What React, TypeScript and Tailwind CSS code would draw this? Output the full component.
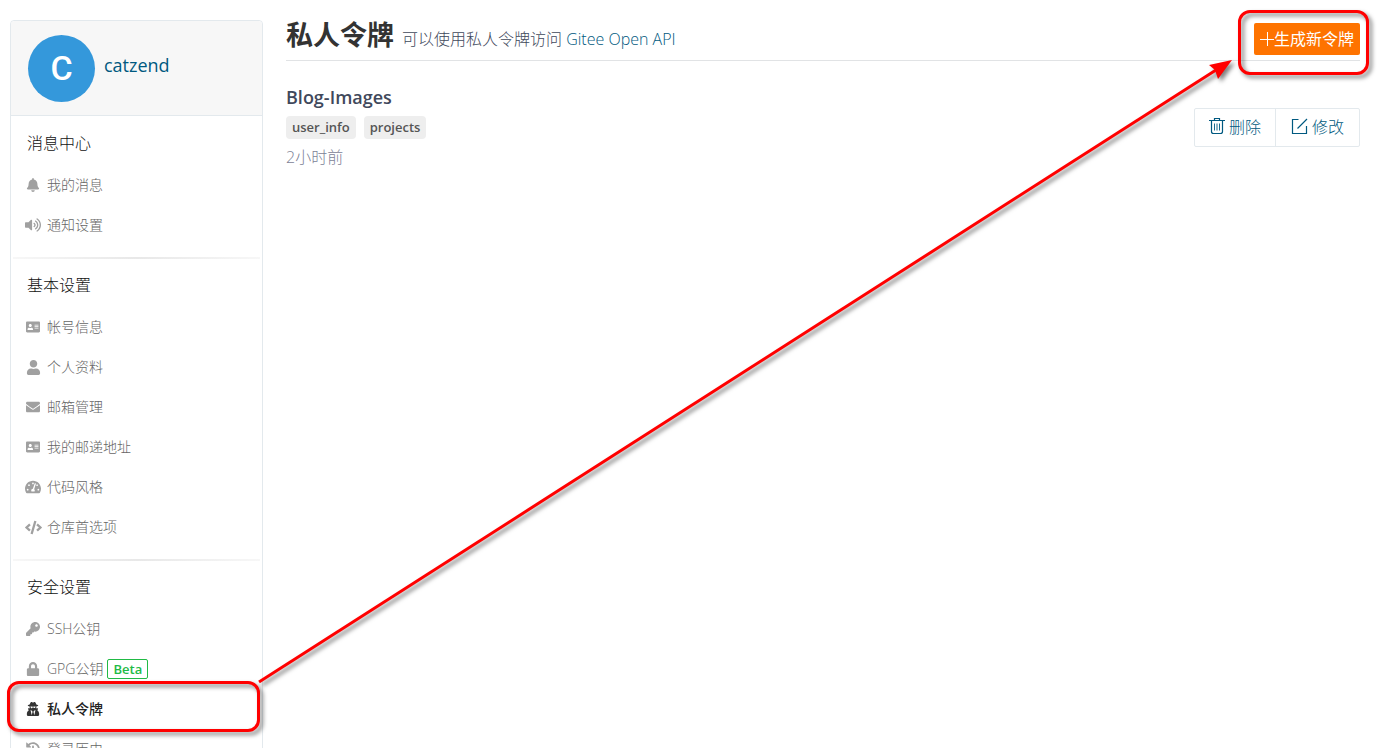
import React from "react";
import {
  FaBell, FaVolumeUp, FaAddressCard, FaUser, FaEnvelope, FaTachometerAlt,
  FaCode, FaKey, FaLock, FaUserSecret, FaHistory,
} from "react-icons/fa";
import type { IconType } from "react-icons";

type Item = { label: string; icon: IconType; size?: number; beta?: boolean; active?: boolean };
type Group = { title: string; items: Item[] };

const groups: Group[] = [
  {
    title: "消息中心",
    items: [
      { label: "我的消息", icon: FaBell },
      { label: "通知设置", icon: FaVolumeUp, size: 16 },
    ],
  },
  {
    title: "基本设置",
    items: [
      { label: "帐号信息", icon: FaAddressCard },
      { label: "个人资料", icon: FaUser, size: 15 },
      { label: "邮箱管理", icon: FaEnvelope },
      { label: "我的邮递地址", icon: FaAddressCard },
      { label: "代码风格", icon: FaTachometerAlt, size: 16 },
      { label: "仓库首选项", icon: FaCode, size: 17 },
    ],
  },
  {
    title: "安全设置",
    items: [
      { label: "SSH公钥", icon: FaKey },
      { label: "GPG公钥", icon: FaLock, beta: true },
      { label: "私人令牌", icon: FaUserSecret, active: true },
      { label: "登录历史", icon: FaHistory },
    ],
  },
];

function MenuItem({ label, icon: Icon, size = 14, beta, active }: Item) {
  return (
    <li className="relative flex h-10 items-center">
      <a
        href="#"
        className={
          active
            ? "flex items-center gap-1.5 text-sm font-medium text-[#222]"
            : "flex items-center gap-1.5 text-sm font-light text-[#666]"
        }
      >
        <span className={active ? "flex w-4 justify-center text-[#333]" : "flex w-4 justify-center text-[#a0a0a0]"}>
          <Icon size={size} className="shrink-0" />
        </span>
        {label}
      </a>
      {beta && (
        <span className="ml-1 rounded-xs border border-[#21ba45] px-[5px] text-[13px] leading-[18px] font-semibold text-[#21ba45]">
          Beta
        </span>
      )}
      {active && (
        <span className="pointer-events-none absolute -top-2 right-0 -bottom-[3px] -left-[18px] rounded-xl border-[3px] border-[#f00] drop-shadow-[3px_3px_2px_rgba(0,0,0,0.5)]" />
      )}
    </li>
  );
}

function TrashIcon() {
  return (
    <svg width="16" height="17" viewBox="0 0 16 17" fill="none" stroke="currentColor">
      <path d="M0 2.5h16M5.5 2.5v-2h5v2M2.5 2.5v11q0 2 2 2h7q2 0 2-2v-11" strokeWidth="1.2" />
      <path d="M5.5 5.5v7M8 5.5v7M10.5 5.5v7" strokeWidth="0.9" />
    </svg>
  );
}

function EditIcon() {
  return (
    <svg width="17" height="17" viewBox="0 0 17 17" fill="none" stroke="currentColor" strokeWidth="1.2">
      <path d="M7.5 1.5H1.5v14H15.5V8M6.5 10.5L16 1" />
    </svg>
  );
}

function PlusIcon() {
  return (
    <svg width="14" height="16" viewBox="0 0 14 16" fill="none" stroke="currentColor">
      <path d="M0 8.5h14M7.5 1v14" />
    </svg>
  );
}

export default function App() {
  return (
    <div className="relative flex h-screen items-start gap-[23px] overflow-hidden bg-white pr-5 pl-2.5 font-['Open_Sans','Noto_Sans_CJK_SC',sans-serif] text-base font-light text-[#40485b]">
      <aside className="mt-5 w-[253px] shrink-0 rounded-t border border-[#e3e9ed]">
        <header className="flex h-[95px] items-center gap-[9px] rounded-t border-b border-[#e3e9ed] bg-[#f7f7f7] pl-[17px]">
          <span className="flex size-[67px] items-center justify-center rounded-full bg-[#3498db] font-['Roboto',sans-serif] text-[34px] font-medium text-white">
            C
          </span>
          <a href="#" className="pb-1.5 text-lg font-normal text-[#005980]">catzend</a>
        </header>
        <nav className="pt-px">
          {groups.map((g, i) => (
            <section key={g.title} className="pr-0.5 pl-3.5">
              {i > 0 && <div className="-ml-3 h-0.5 bg-linear-to-r from-[#f7f7f7] via-[#e8e8e8] to-[#f7f7f7]" />}
              <h2 className="flex h-12 items-end pb-2.5 pl-0.5 text-base leading-6 text-[#111]">{g.title}</h2>
              <ul className="pb-3">
                {g.items.map((it) => (
                  <MenuItem key={it.label} {...it} />
                ))}
              </ul>
            </section>
          ))}
        </nav>
      </aside>

      <main className="min-w-0 grow">
        <header className="flex h-[61px] justify-between border-b border-[#e1e3e5]">
          <div className="flex items-baseline gap-2 pt-[15px]">
            <h1 className="text-[27px] leading-10 font-bold text-[#333]">私人令牌</h1>
            <p>
              可以使用私人令牌访问 <a href="#" className="text-[#005980]">Gitee Open API</a>
            </p>
          </div>
          <div className="relative mt-[23px] h-8">
            <button type="button" className="flex h-8 items-center rounded-xs bg-[#fe7300] px-1.5 font-normal text-white">
              <PlusIcon />
              生成新令牌
            </button>
            <span className="pointer-events-none absolute -top-[13px] -right-[9px] -bottom-5 -left-4 rounded-xl border-[3px] border-[#f00] drop-shadow-[3px_3px_2px_rgba(0,0,0,0.5)]" />
          </div>
        </header>

        <article className="flex items-start justify-between pt-6">
          <div>
            <h3 className="text-lg leading-6 font-semibold">Blog-Images</h3>
            <div className="mt-[7px] flex gap-2 text-[13px] leading-[23px] font-semibold text-[#555]">
              <span className="rounded-sm bg-[#eee] px-1.5">user_info</span>
              <span className="rounded-sm bg-[#eee] px-1.5">projects</span>
            </div>
            <p className="mt-1.5 leading-6 text-[#7c8296]">2小时前</p>
          </div>
          <div className="mt-[23px] flex divide-x divide-[#e3e9ed] rounded-xs border border-[#e3e9ed] text-[#005980]">
            <button type="button" className="flex h-[37px] items-center gap-1 px-3.5 pb-0.5">
              <TrashIcon />
              删除
            </button>
            <button type="button" className="flex h-[37px] items-center gap-1 px-[15px] pb-0.5">
              <EditIcon />
              修改
            </button>
          </div>
        </article>
      </main>

      <svg
        className="pointer-events-none absolute inset-0 drop-shadow-[3px_3px_2px_rgba(0,0,0,0.5)]"
        width="1380"
        height="748"
        viewBox="0 0 1380 748"
      >
        <path d="M259 682L1216 70" stroke="#f00" strokeWidth="3" fill="none" />
        <path d="M1232 60L1209 65L1215 70L1218 79Z" fill="#f00" />
      </svg>
    </div>
  );
}
